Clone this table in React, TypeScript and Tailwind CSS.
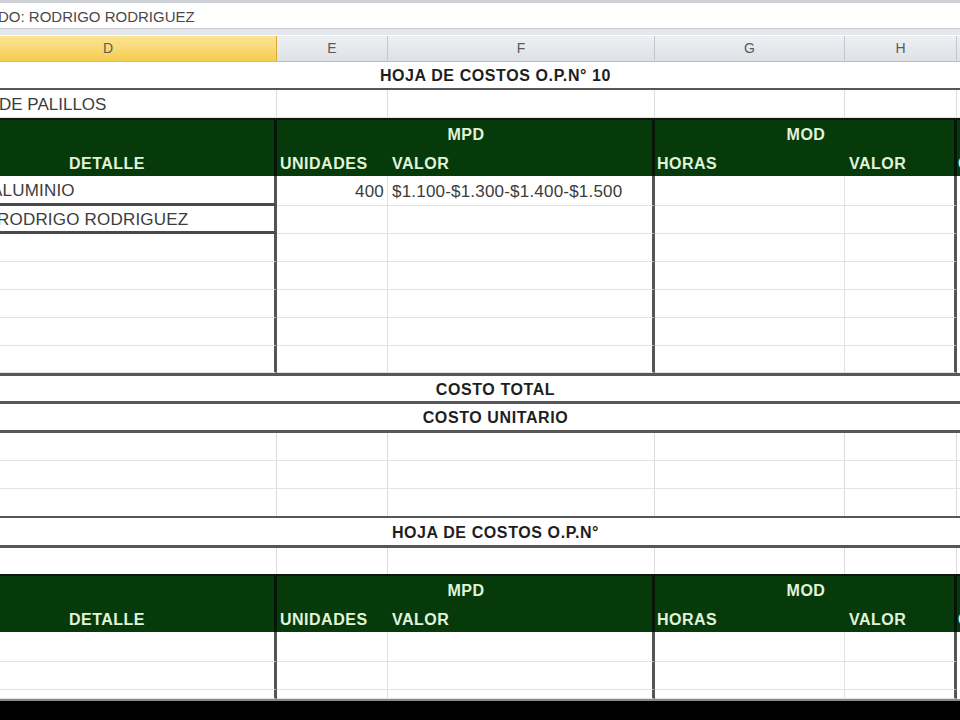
import type { ReactNode } from "react";

const COLS = "grid grid-cols-[277px_111px_267px_190px_112px_3px]";

function Cell({ className = "", children }: { className?: string; children?: ReactNode }) {
  return (
    <div className={"flex items-center overflow-hidden whitespace-nowrap " + className}>
      {children}
    </div>
  );
}

// plain white row with thin gridlines
function BlankRow({ h, first }: { h: string; first?: ReactNode }) {
  return (
    <div className={`${COLS} ${h} border-b border-[#e4e4e4]`}>
      <Cell className="border-r border-[#dcdcdc] pt-[3px] text-[17px] text-[#3c3c3c]">{first}</Cell>
      <Cell className="border-r border-[#dcdcdc]" />
      <Cell className="border-r border-[#dcdcdc]" />
      <Cell className="border-r border-[#dcdcdc]" />
      <Cell className="border-r border-[#dcdcdc]" />
      <Cell />
    </div>
  );
}

// rows inside the framed cost table
function DataRow({
  h,
  detail,
  units,
  value,
  thickBottom,
}: {
  h: string;
  detail?: ReactNode;
  units?: string;
  value?: string;
  thickBottom?: boolean;
}) {
  return (
    <div className={`${COLS} ${h} text-[17px] tracking-[0.2px] text-[#3c3c3c]`}>
      <Cell
        className={`border-r-[3px] border-r-[#555] pt-[2px] ${
          thickBottom ? "border-b-[3px] border-b-[#4a4a4a]" : "border-b border-b-[#e2e2e2]"
        }`}
      >
        {detail}
      </Cell>
      <Cell className="justify-end border-r border-b border-[#e0e0e0] pr-[3px] pt-[2px]">{units}</Cell>
      <Cell className="border-r-[3px] border-r-[#555] border-b border-b-[#e2e2e2] pl-[4px] pt-[2px]">{value}</Cell>
      <Cell className="border-r border-b border-[#e2e2e2]" />
      <Cell className="border-r-[3px] border-r-[#555] border-b border-b-[#e2e2e2]" />
      <Cell />
    </div>
  );
}

function TitleRow({ h, text }: { h: string; text: string }) {
  return (
    <div
      className={`${h} flex items-center justify-center pl-[31px] pt-[2px] text-[16px] font-bold tracking-[0.6px] text-[#1e1e1e]`}
    >
      {text}
    </div>
  );
}

function Thick({ h = "h-[3px]" }: { h?: string }) {
  return <div className={`${h} bg-[#575757]`} />;
}

function GreenHeader() {
  return (
    <div className="grid h-[58px] grid-cols-[277px_378px_302px_3px] border-t-2 border-[#0c1a0c] bg-[#073a0b] text-[16px] font-bold tracking-[0.5px] text-[#e0f4da]">
      <div className="grid grid-rows-2 border-r-[3px] border-[#061606]">
        <div />
        <div className="flex items-center justify-center pr-[60px] pt-[3px]">DETALLE</div>
      </div>
      <div className="grid grid-rows-2 border-r-[3px] border-[#061606]">
        <div className="flex items-center justify-center pt-[2px]">MPD</div>
        <div className="grid grid-cols-[111px_267px] pt-[3px]">
          <div className="flex items-center pl-[3px]">UNIDADES</div>
          <div className="flex items-center pl-[4px]">VALOR</div>
        </div>
      </div>
      <div className="grid grid-rows-2 border-r-[3px] border-[#061606]">
        <div className="flex items-center justify-center pt-[2px]">MOD</div>
        <div className="grid grid-cols-[190px_112px] pt-[3px]">
          <div className="flex items-center pl-[2px]">HORAS</div>
          <div className="flex items-center pl-[4px]">VALOR</div>
        </div>
      </div>
      <div className="grid grid-rows-2 overflow-hidden">
        <div />
        <div className="flex items-center pl-[1px] pt-[3px]">C</div>
      </div>
    </div>
  );
}

function EmptyCols({ h }: { h: string }) {
  return (
    <div className={`${COLS} ${h}`}>
      <Cell className="border-r border-[#dcdcdc]" />
      <Cell className="border-r border-[#dcdcdc]" />
      <Cell className="border-r border-[#dcdcdc]" />
      <Cell className="border-r border-[#dcdcdc]" />
      <Cell className="border-r border-[#dcdcdc]" />
      <Cell />
    </div>
  );
}

export default function App() {
  return (
    <div className="h-[720px] w-[960px] overflow-hidden bg-white font-['Liberation_Sans',Arial,sans-serif]">
      {/* formula bar */}
      <div className="h-[3px] bg-[#cdd0d4]" />
      <div className="flex h-[25px] items-center overflow-hidden whitespace-nowrap pt-[3px] text-[15px] text-[#4a4a4a]">
        <span className="-ml-[2px]">DO: RODRIGO RODRIGUEZ</span>
      </div>
      <div className="h-[7px] border-t border-[#c9cdd2] bg-[#e4e7eb]" />

      {/* column letters */}
      <div className={`${COLS} h-[27px] border-b border-[#b9bec4] pt-[1px] text-[14px] text-[#5a5a5a]`}>
        <Cell className="justify-center border-r border-[#d9a93a] bg-linear-to-b from-[#fbe593] to-[#f6cc4c] pr-[60px]">
          D
        </Cell>
        <Cell className="justify-center border-r border-[#c3c8ce] bg-linear-to-b from-[#eef0f3] to-[#dde1e6]">E</Cell>
        <Cell className="justify-center border-r border-[#c3c8ce] bg-linear-to-b from-[#eef0f3] to-[#dde1e6]">F</Cell>
        <Cell className="justify-center border-r border-[#c3c8ce] bg-linear-to-b from-[#eef0f3] to-[#dde1e6]">G</Cell>
        <Cell className="justify-center border-r border-[#c3c8ce] bg-linear-to-b from-[#eef0f3] to-[#dde1e6]">H</Cell>
        <Cell className="bg-linear-to-b from-[#eef0f3] to-[#dde1e6]" />
      </div>

      {/* first cost sheet */}
      <TitleRow h="h-[26px]" text="HOJA DE COSTOS O.P.N° 10" />
      <Thick h="h-[2px]" />
      <BlankRow h="h-[28px]" first={<span className="-ml-[1px]">DE PALILLOS</span>} />
      <GreenHeader />
      <DataRow h="h-[30px]" detail={<span className="-ml-[9px]">ALUMINIO</span>} units="400" value="$1.100-$1.300-$1.400-$1.500" thickBottom />
      <DataRow h="h-[28px]" detail={<span className="-ml-[3px]">RODRIGO RODRIGUEZ</span>} thickBottom />
      <DataRow h="h-[28px]" />
      <DataRow h="h-[28px]" />
      <DataRow h="h-[28px]" />
      <DataRow h="h-[28px]" />
      <DataRow h="h-[27px]" />
      <Thick />
      <TitleRow h="h-[25px]" text="COSTO TOTAL" />
      <Thick />
      <TitleRow h="h-[26px]" text="COSTO UNITARIO" />
      <Thick />
      <BlankRow h="h-[28px]" />
      <BlankRow h="h-[28px]" />
      <EmptyCols h="h-[27px]" />
      <Thick h="h-[2px]" />

      {/* second cost sheet */}
      <TitleRow h="h-[27px]" text="HOJA DE COSTOS O.P.N°" />
      <Thick />
      <EmptyCols h="h-[26px]" />
      <GreenHeader />
      <DataRow h="h-[30px]" />
      <DataRow h="h-[28px]" />
      <DataRow h="h-[9px]" />
      <div className="h-[2px] bg-[#8a8a8a]" />
      <div className="h-[30px] bg-black" />
    </div>
  );
}
